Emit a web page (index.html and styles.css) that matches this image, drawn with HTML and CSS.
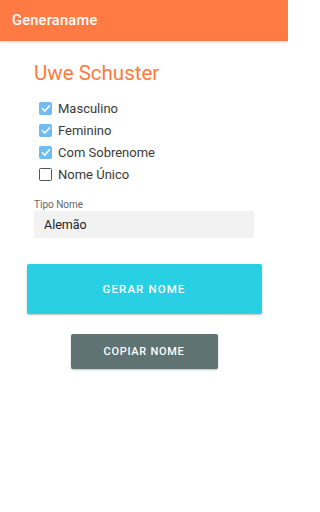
FILE: index.html
```html
<!DOCTYPE html>
<html>
<head>
<meta charset="utf-8">
<link rel="stylesheet" href="styles.css">
</head>
<body>
<header class="appbar"><span class="title">Generaname</span></header>
<main class="content">
  <h1 class="name">Uwe Schuster</h1>
  <ul class="checks">
    <li class="check on"><span class="box"><svg viewBox="0 0 14 14" width="14" height="14"><path d="M3 7.2 L5.8 10 L11 4.2" fill="none" stroke="#fff" stroke-width="1.6"/></svg></span>Masculino</li>
    <li class="check on"><span class="box"><svg viewBox="0 0 14 14" width="14" height="14"><path d="M3 7.2 L5.8 10 L11 4.2" fill="none" stroke="#fff" stroke-width="1.6"/></svg></span>Feminino</li>
    <li class="check on"><span class="box"><svg viewBox="0 0 14 14" width="14" height="14"><path d="M3 7.2 L5.8 10 L11 4.2" fill="none" stroke="#fff" stroke-width="1.6"/></svg></span>Com Sobrenome</li>
    <li class="check"><span class="box"></span>Nome Único</li>
  </ul>
  <div class="field">
    <label class="label">Tipo Nome</label>
    <div class="input">Alemão</div>
  </div>
</main>
<div class="actions">
  <button class="btn primary">GERAR NOME</button>
  <button class="btn secondary">COPIAR NOME</button>
</div>
</body>
</html>
```
FILE: styles.css
```css
* { box-sizing: border-box; }
html, body { margin: 0; padding: 0; background: #fff; }
body { width: 288px; height: 512px; font-family: Roboto, "Noto Sans", sans-serif; color: #333; }
.appbar {
  height: 41px;
  background: #ff7b43;
  display: flex;
  align-items: center;
  padding-left: 12px;
  box-shadow: 0 1px 3px rgba(0,0,0,0.18);
}
.title { color: #fff; font-size: 14.5px; font-weight: 500; letter-spacing: 0.3px; }
.content { padding: 19px 34px 0 34px; }
.name { margin: 0; font-size: 20.5px; font-weight: 400; color: #ff7a3c; line-height: 26px; }
.checks { list-style: none; margin: 11px 0 0 5px; padding: 0; }
.check { display: flex; align-items: center; height: 22px; font-size: 13px; color: #3a3a3a; }
.box {
  width: 13px; height: 13px; margin-right: 6px; border-radius: 1.5px;
  border: 1.5px solid #555; display: flex; align-items: center; justify-content: center;
}
.check.on .box { background: #6ebcf4; border-color: #6ebcf4; }
.box svg { display: block; flex: none; }
.field { margin-top: 14px; }
.label { display: block; font-size: 10px; color: #666; line-height: 12px; }
.input {
  margin-top: 0; height: 27px; width: 220px; background: #f2f2f2;
  font-size: 12.5px; color: #222; padding-left: 10px; display: flex; align-items: center;
}
.actions { display: flex; flex-direction: column; align-items: center; margin-top: 26px; }
.btn {
  border: none; color: #fff; font-family: Roboto, sans-serif; font-weight: 500;
  border-radius: 2px; box-shadow: 0 1px 2px rgba(0,0,0,0.25);
}
.primary { width: 235px; height: 50px; background: #29d0e4; font-size: 11.5px; letter-spacing: 1.1px; }
.secondary { width: 147px; height: 35px; background: #5f7372; font-size: 11px; letter-spacing: 0.7px; margin-top: 20px; }
```
